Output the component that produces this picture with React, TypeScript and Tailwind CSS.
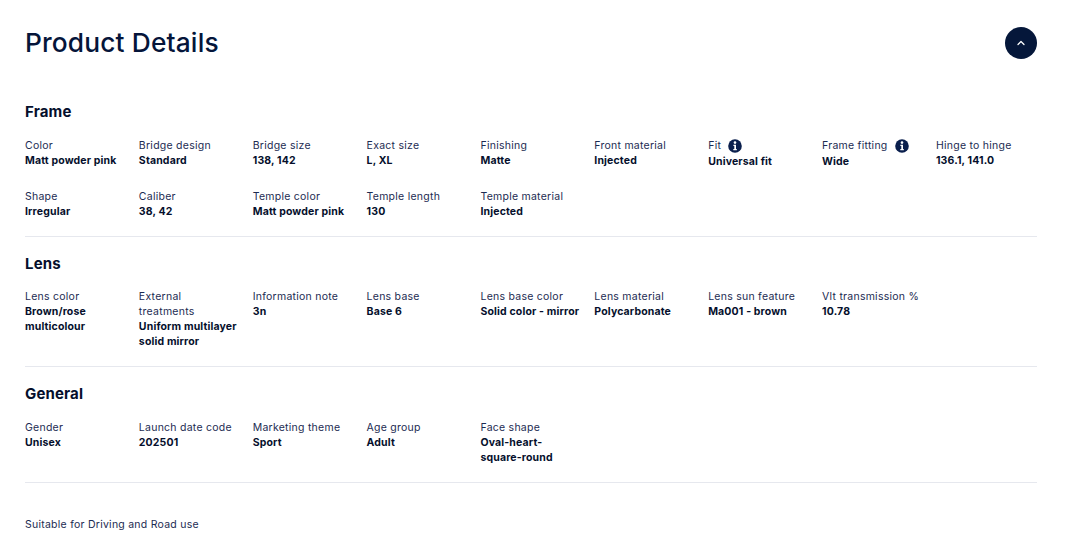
import { ChevronUp } from 'lucide-react';

type Item = { label: string; value: string; info?: boolean };

const frame: Item[] = [
  { label: 'Color', value: 'Matt powder pink' },
  { label: 'Bridge design', value: 'Standard' },
  { label: 'Bridge size', value: '138, 142' },
  { label: 'Exact size', value: 'L, XL' },
  { label: 'Finishing', value: 'Matte' },
  { label: 'Front material', value: 'Injected' },
  { label: 'Fit', value: 'Universal fit', info: true },
  { label: 'Frame fitting', value: 'Wide', info: true },
  { label: 'Hinge to hinge', value: '136.1, 141.0' },
  { label: 'Shape', value: 'Irregular' },
  { label: 'Caliber', value: '38, 42' },
  { label: 'Temple color', value: 'Matt powder pink' },
  { label: 'Temple length', value: '130' },
  { label: 'Temple material', value: 'Injected' },
];

const lens: Item[] = [
  { label: 'Lens color', value: 'Brown/rose multicolour' },
  { label: 'External treatments', value: 'Uniform multilayer solid mirror' },
  { label: 'Information note', value: '3n' },
  { label: 'Lens base', value: 'Base 6' },
  { label: 'Lens base color', value: 'Solid color - mirror' },
  { label: 'Lens material', value: 'Polycarbonate' },
  { label: 'Lens sun feature', value: 'Ma001 - brown' },
  { label: 'Vlt transmission %', value: '10.78' },
];

const general: Item[] = [
  { label: 'Gender', value: 'Unisex' },
  { label: 'Launch date code', value: '202501' },
  { label: 'Marketing theme', value: 'Sport' },
  { label: 'Age group', value: 'Adult' },
  { label: 'Face shape', value: 'Oval-heart-square-round' },
];

function InfoIcon() {
  return (
    <svg width="14" height="14" viewBox="0 0 14 14" className="shrink-0">
      <circle cx="7" cy="7" r="6.8" fill="#0a1f4d" />
      <circle cx="7" cy="3.6" r="1.3" fill="#fff" />
      <path d="M5.4 5.8H8v4.3h0.8v1.1H5.3v-1.1h1V6.9H5.4z" fill="#fff" />
    </svg>
  );
}

function Spec({ item }: { item: Item }) {
  return (
    <div>
      <div className="flex max-w-[98px] items-center gap-[7px] text-[10.5px] leading-[15px] font-normal tracking-[0.25px] text-[#1c2b52]">
        <span>{item.label}</span>
        {item.info && <InfoIcon />}
      </div>
      <div className={`text-[10.5px] leading-[15px] font-bold text-[#050f2c] ${item.info ? 'mt-[1px]' : ''}`}>{item.value}</div>
    </div>
  );
}

function Section({ title, items, pb, gridMt }: { title: string; items: Item[]; pb: string; gridMt: string }) {
  return (
    <section className={`border-b border-[#e6e8ee] ${pb}`}>
      <h3 className="text-[15px] leading-[20px] font-bold text-[#050f2c]">{title}</h3>
      <div className={`${gridMt} grid grid-cols-9 gap-x-[12.8px] gap-y-[20px]`}>
        {items.map((item) => (
          <Spec key={item.label} item={item} />
        ))}
      </div>
    </section>
  );
}

export default function App() {
  return (
    <div className="h-[558px] overflow-hidden bg-white px-[25px] pr-[31px] pt-[27px] font-['Inter',sans-serif] tracking-[0.15px]">
      <div className="flex h-8 items-center justify-between">
        <h2 className="-mt-[1px] text-[26.3px] leading-[32px] font-medium text-[#05153a]">Product Details</h2>
        <button className="flex h-8 w-8 items-center justify-center rounded-full bg-[#05173a] text-white">
          <ChevronUp size={12} strokeWidth={2.5} />
        </button>
      </div>

      <div className="mt-[43px] flex flex-col gap-[17px]">
        <Section title="Frame" items={frame} pb="pb-[17px]" gridMt="mt-[16px]" />
        <Section title="Lens" items={lens} pb="pb-[17px]" gridMt="mt-[15px]" />
        <Section title="General" items={general} pb="pb-[17px]" gridMt="mt-[16px]" />
      </div>

      <p className="mt-[34px] text-[10.5px] leading-[15px] tracking-[0.25px] text-[#1c2b52]">Suitable for Driving and Road use</p>
    </div>
  );
}
